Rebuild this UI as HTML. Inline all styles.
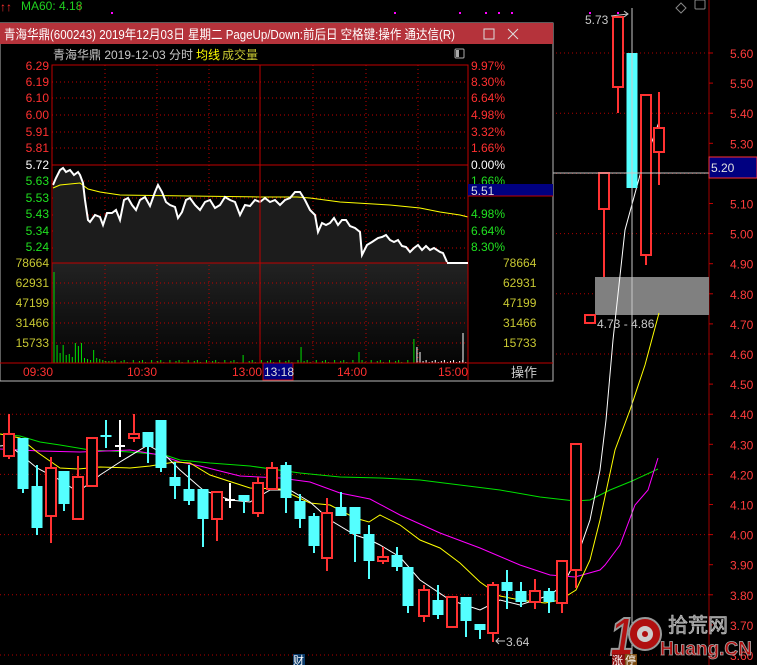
<!DOCTYPE html>
<html><head><meta charset="utf-8"><style>
html,body{margin:0;padding:0;background:#000;width:757px;height:665px;overflow:hidden}
svg{display:block}
text{font-family:"Liberation Sans","Noto Sans CJK SC",sans-serif}
</style></head><body>
<svg id="s" width="757" height="665" xmlns="http://www.w3.org/2000/svg">
<rect width="757" height="665" fill="#000"/>
<g id="grid" stroke="#b00000" stroke-width="1" stroke-dasharray="1,3"></g>
<line x1="709" y1="0" x2="709" y2="665" stroke="#a00000"/>
<g id="ticks"></g>
<g id="ylab" fill="#ff3c3c" font-size="12"></g>
<rect x="595" y="277" width="114" height="38" fill="#808080"/>
<g id="ma"></g>
<g id="cd"></g>
<line x1="632" y1="8" x2="632" y2="665" stroke="#c8c8c8"/>
<line x1="553" y1="173" x2="709" y2="173" stroke="#c8c8c8"/>
<rect x="709" y="157" width="48" height="21" fill="#000080" stroke="#ff3030"/>
<text x="711" y="172" fill="#e0e0e0" font-size="12">5.20</text>
<text x="585" y="24" fill="#c8c8c8" font-size="12">5.73</text>
<path d="M611 16 L628 14 M624 11 L628 14 L624 17" stroke="#c8c8c8" fill="none"/>
<text x="597" y="328" fill="#c8c8c8" font-size="12">4.73 - 4.86</text>
<path d="M496 641 L505 641 M499 638 L496 641 L499 644" stroke="#c8c8c8" fill="none"/>
<text x="506" y="646" fill="#c8c8c8" font-size="12">3.64</text>
<rect x="293" y="654" width="12" height="11" fill="#0a3a6a"/>
<text x="293" y="664" fill="#fff" font-size="11">财</text>
<!-- watermark -->
<text x="610" y="655" font-size="54" font-weight="bold" fill="#b01010" stroke="#999" stroke-width="2" font-style="italic" textLength="24" lengthAdjust="spacingAndGlyphs">1</text>
<circle cx="645" cy="634" r="16" fill="#b01010" stroke="#999" stroke-width="2"/>
<circle cx="645" cy="634" r="8" fill="#ccc"/>
<circle cx="645" cy="634" r="3" fill="#b01010"/>
<text x="668" y="632" font-size="20" fill="#8a8a8a" stroke="#ccc" stroke-width="0.6">拾荒网</text>
<text x="660" y="655" font-size="19" font-weight="bold" fill="#b01010" stroke="#aaa" stroke-width="0.8">Huang.CN</text>
<rect x="612" y="654" width="13" height="11" fill="#8a1010"/>
<text x="612" y="664" fill="#fff" font-size="11">涨</text>
<rect x="625" y="654" width="12" height="11" fill="#7a4a10"/>
<text x="625" y="664" fill="#fff" font-size="11">停</text>
<!-- top line -->
<text x="0" y="11" fill="#ff3030" font-size="12">↑↑</text>
<text x="21" y="10" fill="#20d020" font-size="12">MA60: 4.18</text>
<text x="77" y="11" fill="#ff3030" font-size="12">↑</text>
<g fill="#ff00ff"><rect x="111" y="12" width="2" height="2"/><rect x="394" y="12" width="2" height="2"/><rect x="459" y="12" width="2" height="2"/><rect x="485" y="12" width="2" height="2"/><rect x="498" y="12" width="2" height="2"/><rect x="511" y="12" width="2" height="2"/><rect x="589" y="12" width="2" height="2"/><rect x="617" y="12" width="2" height="2"/></g>
<path d="M681 3 L686 8 L681 13 L676 8Z" stroke="#888" fill="none"/>
<rect x="695" y="0" width="10" height="9" stroke="#888" fill="none" rx="1"/>

<!-- popup -->
<g id="pop">
<rect x="0" y="23" width="553" height="358" fill="#000" stroke="#b8b8b8"/>
<rect x="0" y="23" width="553" height="21" fill="#b5333b"/>
<text x="4" y="39" fill="#fff" font-size="13" textLength="451" lengthAdjust="spacingAndGlyphs">青海华鼎(600243) 2019年12月03日 星期二 PageUp/Down:前后日 空格键:操作 通达信(R)</text>
<rect x="484" y="29" width="10" height="10" fill="none" stroke="#ddd"/>
<path d="M508 29 L518 39 M518 29 L508 39" stroke="#ddd"/>
<text x="53" y="59" fill="#c8c8c8" font-size="12">青海华鼎  2019-12-03 分时</text>
<text x="196" y="59" fill="#ffff00" font-size="12">均线</text>
<text x="222" y="59" fill="#c8c832" font-size="12">成交量</text>
<rect x="455" y="49" width="9" height="9" fill="none" stroke="#aaa" rx="1"/><rect x="456" y="50" width="3" height="7" fill="#aaa"/>
<defs><linearGradient id="g1" x1="0" y1="0" x2="0" y2="1"><stop offset="0" stop-color="#222"/><stop offset="1" stop-color="#050505"/></linearGradient></defs>
<rect x="52" y="263" width="416" height="100" fill="url(#g1)"/>
<g id="pgrid" stroke="#c00000" stroke-dasharray="1,3"></g>
<polygon id="fillp" fill="#1c1c1c"/>
<polyline id="avg" fill="none" stroke="#ffff00" stroke-width="1"/>
<polyline id="pl" fill="none" stroke="#fff" stroke-width="2"/>
<g id="vol"></g>
<g stroke="#c00000" fill="none">
<rect x="52" y="65" width="416" height="298"/>
<line x1="52" y1="165" x2="468" y2="165"/>
<line x1="52" y1="263" x2="468" y2="263"/>
<line x1="260" y1="65" x2="260" y2="363"/>
<line x1="0" y1="363" x2="553" y2="363"/>
<line x1="468" y1="363" x2="468" y2="380"/>
</g>
<line x1="447" y1="263" x2="468" y2="263" stroke="#fff" stroke-width="2"/>
<g id="plab" font-size="12"></g>
<rect x="468" y="184" width="85" height="12" fill="#000080"/>
<text x="471" y="195" fill="#ddd" font-size="12">5.51</text>
<line x1="468" y1="196" x2="553" y2="196" stroke="#c00000"/>
<g fill="#ff3030" font-size="12">
<text x="23" y="376">09:30</text><text x="127" y="376">10:30</text><text x="232" y="376">13:00</text><text x="337" y="376">14:00</text><text x="438" y="376">15:00</text>
</g>
<rect x="263" y="363" width="30" height="17" fill="#000080" stroke="#c00000"/>
<text x="264" y="376" fill="#ddd" font-size="12">13:18</text>
<text x="511" y="377" fill="#ccc" font-size="13">操作</text>
</g>
</svg>
<script>
var NS="http://www.w3.org/2000/svg";
function el(p,t,a){var e=document.createElementNS(NS,t);for(var k in a)e.setAttribute(k,a[k]);document.getElementById(p).appendChild(e);return e;}
function Y(p){return 53+(5.6-p)*301;}
[5.6,5.4,5.2,5.0,4.8,4.6,4.4,4.2,4.0,3.8,3.6].forEach(function(p){var y=Y(p);el('grid','line',{x1:0,y1:y,x2:709,y2:y});});
for(var p=5.6;p>3.55;p-=0.1){var y=Y(p);el('ticks','line',{x1:709,y1:y,x2:713,y2:y,stroke:'#c00000'});
 el('ylab','text',{x:730,y:y+5}).textContent=p.toFixed(2);}
var C=[[9,434,456,414,459,'r'],[23,438,489,438,493,'c'],[37,486,528,465,535,'c'],[51,468,516,457,543,'r'],[64,471,504,471,511,'c'],[78,477,519,456,519,'r'],[92,438,486,438,486,'r'],[106,435,437,420,448,'c'],[120,446,447,420,457,'w'],[134,434,438,414,442,'r'],[148,432,447,432,463,'c'],[161,420,468,420,472,'c'],[175,477,486,462,499,'c'],[189,489,501,465,505,'c'],[203,489,519,489,547,'c'],[217,492,519,492,541,'r'],[230,500,501,483,508,'w'],[244,495,501,495,513,'c'],[258,483,513,477,517,'r'],[272,468,489,462,489,'r'],[286,465,498,462,513,'c'],[300,501,519,494,528,'c'],[314,516,546,513,553,'c'],[327,513,558,498,571,'r'],[341,507,516,492,516,'c'],[355,507,534,507,562,'c'],[369,534,561,525,579,'c'],[383,557,561,547,564,'r'],[397,555,567,547,571,'c'],[408,567,606,567,613,'c'],[424,590,616,585,622,'r'],[438,600,615,585,619,'c'],[452,597,627,597,627,'r'],[466,597,621,597,637,'c'],[480,624,630,624,639,'c'],[493,585,633,582,642,'r'],[507,582,591,570,609,'c'],[521,591,602,582,607,'c'],[535,591,602,579,609,'r'],[549,591,602,588,613,'c'],[562,561,603,561,613,'r'],[576,444,570,444,588,'r'],[590,315,323,315,323,'r'],[604,173,209,173,277,'r'],[618,17,87,17,113,'r'],[632,53,188,53,188,'c'],[646,95,255,95,265,'r'],[659,128,152,92,185,'r']];
C.forEach(function(c){var x=c[0],col=c[5]=='r'?'#ff3232':(c[5]=='c'?'#54ffff':'#ffffff');
 if(c[3]<c[1])el('cd','line',{x1:x,y1:c[3],x2:x,y2:c[1],stroke:col,'stroke-width':2});
 if(c[4]>c[2])el('cd','line',{x1:x,y1:c[2],x2:x,y2:c[4],stroke:col,'stroke-width':2});
 if(c[5]=='r')el('cd','rect',{x:x-5,y:c[1],width:10,height:Math.max(c[2]-c[1],2),fill:'#000',stroke:col,'stroke-width':2});
 else if(c[5]=='c')el('cd','rect',{x:x-5.5,y:c[1],width:11,height:Math.max(c[2]-c[1],2),fill:col});
 else el('cd','line',{x1:x-5,y1:c[1],x2:x+5,y2:c[1],stroke:col,'stroke-width':2});
});
function pl(g,pts,col){el(g,'polyline',{points:pts,fill:'none',stroke:col,'stroke-width':1});}
pl('ma','0,434 20,436 40,442 60,445 90,450 130,452 165,455 180,460 210,463 250,466 300,473 340,477 380,478 420,480 460,485 500,490 540,497 575,501 590,500 610,490 632,481 658,469','#00e000');
pl('ma','0,449 40,451 80,452 130,450 160,455 180,462 200,466 240,476 280,478 310,482 340,493 370,499 400,515 440,533 480,548 520,565 550,575 575,577 600,570 605,565 620,545 635,505 648,490 658,458','#ff00ff');
pl('ma','0,434 20,438 37,452 60,468 78,469 100,467 130,468 150,466 175,462 190,463 210,475 250,488 280,489 310,503 330,505 355,518 369,522 380,515 400,525 420,540 440,548 460,563 480,582 500,596 520,600 545,603 560,600 576,590 590,560 600,520 615,450 630,410 645,365 659,313','#ffff00');
pl('ma','0,446 9,445 37,468 60,480 78,492 100,475 120,462 148,445 165,455 180,470 203,490 230,500 250,502 270,490 290,490 310,502 330,520 355,535 370,540 380,545 400,557 420,580 450,600 480,610 500,600 520,605 550,595 563,585 576,560 590,520 600,470 606,420 613,340 625,230 640,175 659,122','#ffffff');
[82,98,115,132,148,181,198,215,231,248,283,303,323,343].forEach(function(y){el('pgrid','line',{x1:52,y1:y,x2:468,y2:y});});
[105,157,209,313,366,418].forEach(function(x){el('pgrid','line',{x1:x,y1:65,x2:x,y2:363});});
var P="53,185 56,178 60,170 63,168 66,172 70,170 74,175 78,172 80,175 83,183 85,200 88,220 90,222 95,215 100,217 103,225 107,213 112,213 116,210 120,220 124,200 128,198 132,205 136,210 140,200 145,197 150,206 155,192 158,185 162,192 166,202 170,205 175,207 178,218 182,212 186,200 190,198 195,205 200,210 205,202 210,200 215,208 220,205 225,197 230,200 235,202 240,215 245,205 250,206 255,200 260,202 265,198 270,202 275,200 280,205 285,200 290,198 295,192 300,192 305,200 310,210 315,215 318,232 322,223 326,225 330,223 334,218 338,225 342,220 346,220 350,226 355,228 360,232 362,255 367,245 372,242 378,238 382,237 386,235 390,240 394,242 398,240 402,246 406,247 410,252 414,248 418,245 422,250 426,246 430,250 434,248 440,252 443,253 447,262";
document.getElementById('pl').setAttribute('points',P);
document.getElementById('fillp').setAttribute('points',P+" 447,263 53,263");
document.getElementById('avg').setAttribute('points',"53,188 60,185 80,183 88,189 100,192 120,195 190,196 260,197 297,197 310,198 340,202 390,205 420,208 440,212 460,215 468,217");
var vh=[91,18,10,18,8,9,6,20,17,20,5,4,3,13,5,4,3,2,2];
var cols=['#00e000','#ff3030','#00e000','#ff3030'];
for(var i=0;i<136;i++){var x=54+i*3.05;var h=i<vh.length?vh[i]:(1+((i*7)%3));
 if(i==62)h=8; if(i==81)h=16; if(i==100)h=11; if(i==118)h=24; if(i==119)h=16;if(i==120)h=11;
 var c=i>118?'#ffffff':cols[(i*3+i%2)%4];
 if(i%2==1&&i>20&&i<118&&h<3)continue;
 if(x<466)el('vol','line',{x1:x,y1:363-h,x2:x,y2:363,stroke:c,'stroke-width':1});}
el('vol','line',{x1:463,y1:333,x2:463,y2:363,stroke:'#fff'});
var L=[['6.29',70,'#ff3030'],['6.19',86,'#ff3030'],['6.10',102,'#ff3030'],['6.00',119,'#ff3030'],['5.91',136,'#ff3030'],['5.81',152,'#ff3030'],['5.72',169,'#fff'],['5.63',185,'#20e020'],['5.53',202,'#20e020'],['5.43',218,'#20e020'],['5.34',235,'#20e020'],['5.24',251,'#20e020']];
L.forEach(function(l){var t=el('plab','text',{x:49,y:l[1],fill:l[2],'text-anchor':'end'});t.textContent=l[0];});
var R=[['9.97%',70,'#ff3030'],['8.30%',86,'#ff3030'],['6.64%',102,'#ff3030'],['4.98%',119,'#ff3030'],['3.32%',136,'#ff3030'],['1.66%',152,'#ff3030'],['0.00%',169,'#fff'],['1.66%',185,'#20e020'],['4.98%',218,'#20e020'],['6.64%',235,'#20e020'],['8.30%',251,'#20e020']];
R.forEach(function(l){var t=el('plab','text',{x:471,y:l[1],fill:l[2]});t.textContent=l[0];});
[['78664',267],['62931',287],['47199',307],['31466',327],['15733',347]].forEach(function(l){
 var t=el('plab','text',{x:49,y:l[1],fill:'#c8c832','text-anchor':'end'});t.textContent=l[0];
 t=el('plab','text',{x:503,y:l[1],fill:'#c8c832'});t.textContent=l[0];});
</script>
</body></html>
